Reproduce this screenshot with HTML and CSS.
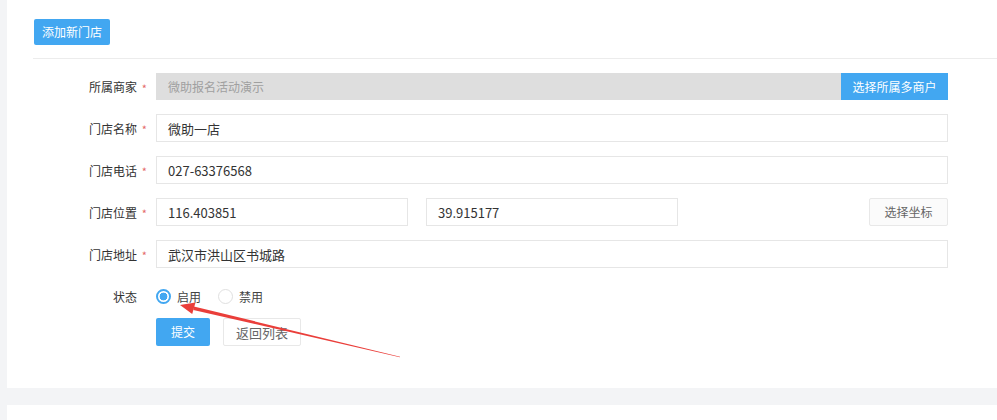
FILE: index.html
```html
<!DOCTYPE html>
<html lang="zh-CN">
<head>
<meta charset="utf-8">
<title>添加新门店</title>
<link rel="stylesheet" href="styles.css">
</head>
<body>
<div class="panel">
  <div class="header">
    <a class="btn btn-primary btn-add">添加新门店</a>
  </div>
  <div class="divider"></div>
  <form class="form">
    <div class="row">
      <label class="label">所属商家<span class="star">*</span></label>
      <div class="field">
        <div class="input disabled grow">微助报名活动演示</div>
        <a class="btn btn-primary btn-merchant">选择所属多商户</a>
      </div>
    </div>
    <div class="row">
      <label class="label">门店名称<span class="star">*</span></label>
      <div class="field"><div class="input grow">微助一店</div></div>
    </div>
    <div class="row">
      <label class="label">门店电话<span class="star">*</span></label>
      <div class="field"><div class="input grow">027-63376568</div></div>
    </div>
    <div class="row">
      <label class="label">门店位置<span class="star">*</span></label>
      <div class="field">
        <div class="input half">116.403851</div>
        <div class="input half">39.915177</div>
        <span class="spacer"></span>
        <a class="btn btn-default btn-coord">选择坐标</a>
      </div>
    </div>
    <div class="row">
      <label class="label">门店地址<span class="star">*</span></label>
      <div class="field"><div class="input grow">武汉市洪山区书城路</div></div>
    </div>
    <div class="row row-status">
      <label class="label">状态<span class="star hidden">*</span></label>
      <div class="field radios">
        <span class="radio checked"><i></i>启用</span>
        <span class="radio"><i></i>禁用</span>
      </div>
    </div>
    <div class="row row-actions">
      <span class="label"></span>
      <div class="field">
        <a class="btn btn-primary btn-submit">提交</a>
        <a class="btn btn-default btn-back">返回列表</a>
      </div>
    </div>
  </form>
  <svg class="arrow" width="997" height="388" viewBox="0 0 997 388" xmlns="http://www.w3.org/2000/svg">
    <polygon fill="#ea3e3a" points="400.1,356.7 399.9,357.3 193.3,309.9 193.9,306.5"/>
    <polygon fill="#ea3e3a" points="180,305 195.5,302.5 192.2,314"/>
  </svg>
</div>
<div class="panel panel-next"></div>
</body>
</html>
```
FILE: styles.css
```css
html, body {
  margin: 0;
  padding: 0;
}
body {
  background: #f3f4f6;
  font-family: "Noto Sans CJK SC", "Microsoft YaHei", "Liberation Sans", sans-serif;
  font-size: 12px;
  color: #333;
  width: 997px;
  height: 420px;
  overflow: hidden;
}
.panel {
  position: relative;
  margin-left: 7px;
  background: #fff;
  height: 388px;
  box-sizing: border-box;
}
.panel-next {
  margin-top: 17px;
  height: 15px;
}
.header {
  padding: 19px 0 0 27px;
  height: 26px;
}
.btn {
  display: inline-flex;
  align-items: center;
  justify-content: center;
  box-sizing: border-box;
  height: 28px;
  font-size: 12px;
  line-height: 1;
  text-decoration: none;
  cursor: pointer;
  white-space: nowrap;
}
.btn-primary {
  background: #42a7f1;
  color: #fff;
  border-radius: 2px;
}
.btn-default {
  background: #fff;
  color: #666;
  border: 1px solid #e8e8e8;
  border-radius: 2px;
}
.btn-add {
  width: 76px;
  height: 26px;
}
.divider {
  margin: 13px 0 0 26px;
  height: 1px;
  background: #ececec;
}
.form {
  padding-top: 14px;
  width: 941px;
}
.row {
  display: flex;
  align-items: center;
  height: 27px;
  margin-bottom: 14px;
}
.row + .row {
  height: 28px;
}
.label {
  width: 140px;
  flex: none;
  display: flex;
  justify-content: flex-end;
  align-items: center;
  margin-right: 9px;
  color: #333;
}
.star {
  width: 10px;
  text-align: right;
  color: #e46a6a;
  font-size: 11px;
  padding-top: 2px;
}
.star.hidden {
  visibility: hidden;
}
.field {
  flex: 1;
  display: flex;
  align-items: stretch;
  height: 100%;
  gap: 18px;
}
.input {
  box-sizing: border-box;
  display: flex;
  align-items: center;
  height: 100%;
  padding: 0 11px;
  border: 1px solid #e6e6e6;
  background: #fff;
  color: #333;
  font-size: 13px;
}
.grow {
  flex: 1;
}
.input.disabled {
  background: #dedede;
  border-color: #dedede;
  color: #a0a0a0;
  font-size: 12px;
}
.btn-merchant {
  width: 107px;
  height: 100%;
  border-radius: 0;
  margin-left: -18px;
  font-size: 12px;
}
.half {
  width: 252px;
  flex: none;
}
.spacer {
  flex: 1;
}
.btn-coord {
  width: 79px;
  height: 100%;
  background: #fbfbfb;
}
.row-status {
  margin-bottom: 8px;
}
.radios {
  align-items: center;
  gap: 17px;
}
.radio {
  display: inline-flex;
  align-items: center;
  color: #444;
}
.radio i {
  box-sizing: border-box;
  width: 15px;
  height: 15px;
  border-radius: 50%;
  border: 1px solid #e0e0e0;
  margin-right: 6px;
  background: #fff;
}
.radio.checked i {
  border: 2px solid #42a7f1;
  background: radial-gradient(circle, #42a7f1 0 3.6px, #fff 4.2px);
}
.row-actions .field {
  gap: 13px;
}
.btn-submit {
  width: 54px;
}
.btn-back {
  width: 78px;
  font-size: 13px;
}
.arrow {
  position: absolute;
  left: -7px;
  top: 0;
  pointer-events: none;
}
```
